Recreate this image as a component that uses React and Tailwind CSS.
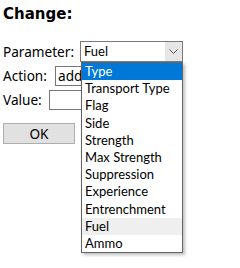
import React from "react";

const options = [
  "Type",
  "Transport Type",
  "Flag",
  "Side",
  "Strength",
  "Max Strength",
  "Suppression",
  "Experience",
  "Entrenchment",
  "Fuel",
  "Ammo",
];

export default function App() {
  return (
    <div className="relative h-[268px] w-[240px] bg-white text-black font-['Noto_Sans',sans-serif] text-[13.6px]">
      <div className="px-[3px] pt-[4px]">
        <h3 className="font-['DejaVu_Sans',sans-serif] text-[15px] font-bold leading-[20px]">Change:</h3>

        <div className="mt-[17px] flex items-center">
          <span className="w-[77px] leading-[20px]">Parameter:</span>
          <div className="relative">
            <div className="flex h-[21px] w-[103px] items-center border border-[#7a7a7a] bg-white">
              <span className="flex-1 pl-[3px] font-['Lato',sans-serif] text-[13px] leading-[19px]">Fuel</span>
              <span className="flex h-[19px] w-[17px] items-center justify-center bg-[#e6e6e6]">
                <svg width="9" height="6" viewBox="0 0 9 6">
                  <path d="M0.5 0.5 L4.5 4.5 L8.5 0.5" fill="none" stroke="#555" strokeWidth="1" />
                </svg>
              </span>
            </div>
            <ul className="absolute left-[1px] top-[21px] z-10 w-[102px] border border-[#646464] bg-white font-['Lato',sans-serif] text-[13px] shadow-[2px_2px_3px_rgba(0,0,0,0.25)]">
              {options.map((o, i) => (
                <li
                  key={o}
                  className={`h-[17.2px] pl-[3px] leading-[17px] whitespace-nowrap ${
                    i === 0 ? "bg-[#0078d7] text-white" : o === "Fuel" ? "bg-[#efefef]" : ""
                  }`}
                >
                  {o}
                </li>
              ))}
            </ul>
          </div>
        </div>

        <div className="mt-[4px] flex items-center">
          <span className="w-[52px] leading-[20px]">Action:</span>
          <div className="h-[20px] w-[120px] border border-[#767676] pl-[2px] leading-[18px]">add</div>
        </div>

        <div className="mt-[4px] flex items-center">
          <span className="w-[46px] leading-[20px]">Value:</span>
          <div className="h-[20px] w-[120px] border border-[#767676]"></div>
        </div>

        <button className="mt-[13px] flex h-[21px] w-[72px] items-center justify-center border border-[#adadad] bg-[#e1e1e1] leading-[19px]">
          OK
        </button>
      </div>
    </div>
  );
}
